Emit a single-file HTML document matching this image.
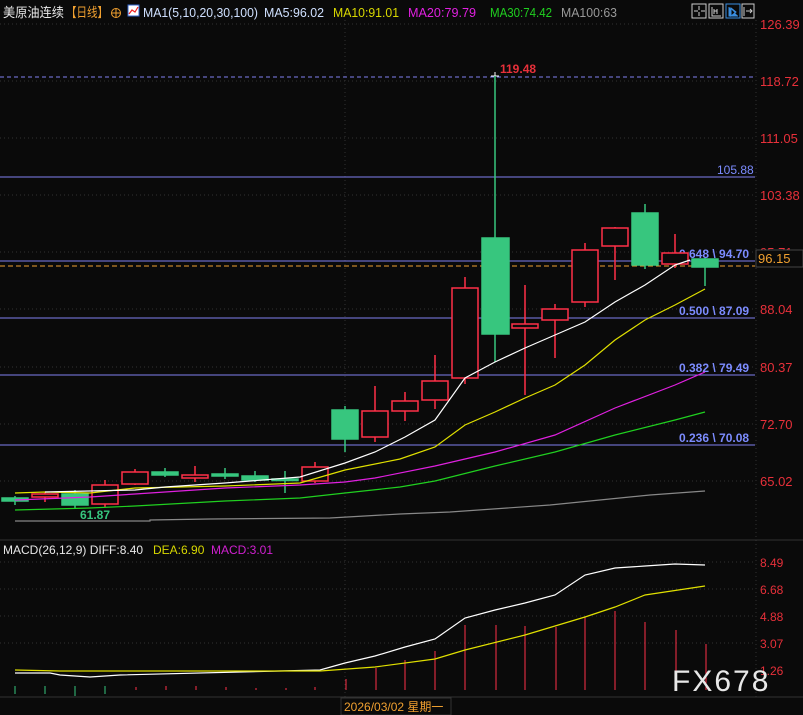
<!DOCTYPE html>
<html><head><meta charset="utf-8"><style>
html,body{margin:0;padding:0;background:#0a0a0a;width:803px;height:715px;overflow:hidden}
svg{display:block}
text{font-family:"Liberation Sans","Noto Sans CJK SC",sans-serif}
</style></head><body>
<svg width="803" height="715" viewBox="0 0 803 715" xmlns="http://www.w3.org/2000/svg">
<rect width="803" height="715" fill="#0a0a0a"/>
<!-- header -->
<text x="3" y="17" font-size="13" fill="#e8e8e8" textLength="61" lengthAdjust="spacingAndGlyphs">美原油连续</text>
<text x="66" y="17" font-size="13" fill="#f0a030" textLength="42" lengthAdjust="spacingAndGlyphs">【日线】</text>
<circle cx="116" cy="13" r="4.5" fill="none" stroke="#f0a030" stroke-width="1"/>
<path d="M111.5 13h9M116 8.5v9" stroke="#f0a030" stroke-width="1"/>
<rect x="128" y="5" width="11" height="11" fill="#fff" stroke="#36c" stroke-width="1"/>
<path d="M129 14l3-4 3 2 3-5" stroke="#e22" fill="none" stroke-width="1.2"/>
<text x="143" y="17" font-size="13" fill="#cfe0ff" textLength="115" lengthAdjust="spacingAndGlyphs">MA1(5,10,20,30,100)</text>
<text x="264" y="17" font-size="13" fill="#cfe0ff" textLength="60" lengthAdjust="spacingAndGlyphs">MA5:96.02</text>
<text x="333" y="17" font-size="13" fill="#d8d800" textLength="66" lengthAdjust="spacingAndGlyphs">MA10:91.01</text>
<text x="408" y="17" font-size="13" fill="#e020e0" textLength="68" lengthAdjust="spacingAndGlyphs">MA20:79.79</text>
<text x="490" y="17" font-size="13" fill="#20d020" textLength="62" lengthAdjust="spacingAndGlyphs">MA30:74.42</text>
<text x="561" y="17" font-size="13" fill="#999" textLength="56" lengthAdjust="spacingAndGlyphs">MA100:63</text>
<g fill="none" stroke-width="1">
<rect x="692" y="4" width="14" height="14" stroke="#ccc"/>
<rect x="709" y="4" width="14" height="14" stroke="#ccc"/>
<rect x="726" y="4" width="14" height="14" stroke="#3a8ee0"/>
<rect x="742" y="4" width="12" height="14" stroke="#ccc"/>
<path d="M699 6v4M699 12v4M694 11h4M701 11h4" stroke="#ccc"/>
<path d="M712 7v9h9M714 9v5M717 9v5M714 11h3" stroke="#ccc"/>
<path d="M729 7v9h9M731 8l5 4-5 4z" stroke="#3a8ee0" fill="#3a8ee0"/>
<path d="M744 7v9M746 11h6M750 9l2 2-2 2" stroke="#ccc"/>
</g>
<!-- grid -->
<g stroke="#333" stroke-dasharray="1 3" stroke-width="1">
<line x1="0" y1="24" x2="756" y2="24"/>
<line x1="0" y1="81" x2="756" y2="81"/>
<line x1="0" y1="138" x2="756" y2="138"/>
<line x1="0" y1="195" x2="756" y2="195"/>
<line x1="0" y1="252" x2="756" y2="252"/>
<line x1="0" y1="309" x2="756" y2="309"/>
<line x1="0" y1="367" x2="756" y2="367"/>
<line x1="0" y1="424" x2="756" y2="424"/>
<line x1="0" y1="481" x2="756" y2="481"/>
<line x1="756" y1="20" x2="756" y2="697"/>
<line x1="345" y1="20" x2="345" y2="697"/>
<line x1="0" y1="562" x2="756" y2="562"/>
<line x1="0" y1="589" x2="756" y2="589"/>
<line x1="0" y1="616" x2="756" y2="616"/>
<line x1="0" y1="643" x2="756" y2="643"/>
</g>
<line x1="0" y1="540" x2="803" y2="540" stroke="#333"/>
<line x1="0" y1="697" x2="803" y2="697" stroke="#333"/>
<!-- fib lines -->
<g stroke="#8080f0" stroke-width="1">
<line x1="0" y1="177" x2="755" y2="177"/>
<line x1="0" y1="261" x2="755" y2="261"/>
<line x1="0" y1="318" x2="755" y2="318"/>
<line x1="0" y1="375" x2="755" y2="375"/>
<line x1="0" y1="445" x2="755" y2="445"/>
</g>
<line x1="0" y1="77" x2="755" y2="77" stroke="#8080f0" stroke-dasharray="4 3"/>
<line x1="0" y1="266" x2="755" y2="266" stroke="#f0a030" stroke-dasharray="5 3"/>
<g font-size="12" font-weight="bold" fill="#7c8cff">
<text x="717" y="174" font-weight="normal">105.88</text>
<text x="679" y="258">0.648 \ 94.70</text>
<text x="679" y="315">0.500 \ 87.09</text>
<text x="679" y="372">0.382 \ 79.49</text>
<text x="679" y="442">0.236 \ 70.08</text>
</g>
<!-- price axis -->
<g font-size="13" fill="#e8303a">
<text x="760" y="29">126.39</text>
<text x="760" y="86">118.72</text>
<text x="760" y="143">111.05</text>
<text x="760" y="200">103.38</text>
<text x="760" y="257">95.71</text>
<text x="760" y="314">88.04</text>
<text x="760" y="372">80.37</text>
<text x="760" y="429">72.70</text>
<text x="760" y="486">65.02</text>
</g>
<rect x="756" y="250" width="47" height="17" fill="#0a0a0a" stroke="#444"/>
<text x="758" y="263" font-size="13" fill="#f0a030">96.15</text>
<text x="500" y="73" font-size="12" font-weight="bold" fill="#e8303a">119.48</text>
<path d="M491 76h8M495 72v8" stroke="#fff"/>
<!-- candles -->
<g stroke-width="1.5">
<g stroke="#37c67e" fill="#37c67e">
<line x1="15" y1="496" x2="15" y2="505"/><rect x="2" y="498" width="26" height="3"/>
<line x1="75" y1="490" x2="75" y2="508"/><rect x="62" y="494" width="26" height="11"/>
<line x1="165" y1="468" x2="165" y2="477"/><rect x="152" y="472" width="26" height="3"/>
<line x1="225" y1="468" x2="225" y2="479"/><rect x="212" y="474" width="26" height="2"/>
<line x1="255" y1="471" x2="255" y2="482"/><rect x="242" y="476" width="26" height="4"/>
<line x1="285" y1="471" x2="285" y2="493"/><rect x="272" y="479" width="26" height="1.5"/>
<line x1="345" y1="406" x2="345" y2="452"/><rect x="332" y="410" width="26" height="29"/>
<line x1="495" y1="76" x2="495" y2="362"/><rect x="482" y="238" width="27" height="96"/>
<line x1="645" y1="204" x2="645" y2="269"/><rect x="632" y="213" width="26" height="52"/>
<line x1="705" y1="258" x2="705" y2="286"/><rect x="692" y="259" width="26" height="8"/>
</g>
<g stroke="#ff3048" fill="#0a0a0a">
<line x1="45" y1="492" x2="45" y2="502"/><rect x="32" y="494" width="26" height="3"/>
<line x1="105" y1="480" x2="105" y2="507"/><rect x="92" y="485" width="26" height="19"/>
<line x1="135" y1="469" x2="135" y2="485"/><rect x="122" y="472" width="26" height="12"/>
<line x1="195" y1="466" x2="195" y2="482"/><rect x="182" y="475" width="26" height="3"/>
<line x1="315" y1="462" x2="315" y2="483"/><rect x="302" y="467" width="26" height="14"/>
<line x1="375" y1="386" x2="375" y2="442"/><rect x="362" y="411" width="26" height="26"/>
<line x1="405" y1="392" x2="405" y2="421"/><rect x="392" y="401" width="26" height="10"/>
<line x1="435" y1="355" x2="435" y2="409"/><rect x="422" y="381" width="26" height="19"/>
<line x1="465" y1="277" x2="465" y2="384"/><rect x="452" y="288" width="26" height="90"/>
<line x1="525" y1="285" x2="525" y2="395"/><rect x="512" y="324" width="26" height="4"/>
<line x1="555" y1="304" x2="555" y2="358"/><rect x="542" y="309" width="26" height="11"/>
<line x1="585" y1="243" x2="585" y2="307"/><rect x="572" y="250" width="26" height="52"/>
<line x1="615" y1="227" x2="615" y2="280"/><rect x="602" y="228" width="26" height="18"/>
<line x1="675" y1="234" x2="675" y2="268"/><rect x="662" y="253" width="26" height="11"/>
</g>
</g>
<text x="80" y="519" font-size="12" font-weight="bold" fill="#37c67e">61.87</text>
<!-- MAs -->
<g fill="none" stroke-width="1.2">
<polyline stroke="#888" points="15,521 150,521 150,520 210,519 330,518 400,514 450,512 550,505 650,495 705,491"/>
<polyline stroke="#20d020" points="15,510 90,508 135,506 225,501 300,498 345,493 400,487 435,481 495,466 555,452 615,435 675,420 705,412"/>
<polyline stroke="#e020e0" points="15,500 90,497 135,494 225,488 300,485 345,482 375,478 435,466 495,452 555,435 615,408 675,385 705,372"/>
<polyline stroke="#e0e000" points="15,493 45,492 90,493 135,488 225,486 300,483 345,470 400,459 435,447 465,425 495,412 525,398 555,385 585,365 615,340 645,320 675,305 705,289"/>
<polyline stroke="#fff" points="45,492 135,490 165,487 225,483 300,477 345,463 375,452 405,437 435,420 465,378 495,362 525,348 555,335 585,322 615,302 645,285 675,265 690,260"/>
</g>
<!-- MACD -->
<text x="3" y="554" font-size="12" fill="#e8e8e8">MACD(26,12,9) DIFF:8.40</text>
<text x="153" y="554" font-size="12" fill="#d8d800">DEA:6.90</text>
<text x="211" y="554" font-size="12" fill="#d020d0">MACD:3.01</text>
<g font-size="12" fill="#e8303a">
<text x="760" y="567">8.49</text><text x="760" y="594">6.68</text><text x="760" y="621">4.88</text><text x="760" y="648">3.07</text><text x="760" y="675">1.26</text>
</g>
<g stroke="#ff3048" stroke-width="1">
<line x1="136" y1="687" x2="136" y2="690"/><line x1="166" y1="686" x2="166" y2="690"/><line x1="196" y1="686" x2="196" y2="690"/><line x1="226" y1="687" x2="226" y2="690"/><line x1="256" y1="688" x2="256" y2="690"/><line x1="286" y1="688" x2="286" y2="690"/>
<line x1="315" y1="687" x2="315" y2="690"/><line x1="346" y1="679" x2="346" y2="690"/><line x1="376" y1="668" x2="376" y2="690"/><line x1="405" y1="660" x2="405" y2="690"/><line x1="435" y1="651" x2="435" y2="690"/><line x1="465" y1="625" x2="465" y2="690"/><line x1="496" y1="625" x2="496" y2="690"/><line x1="525" y1="626" x2="525" y2="690"/><line x1="556" y1="627" x2="556" y2="690"/><line x1="585" y1="617" x2="585" y2="690"/><line x1="615" y1="611" x2="615" y2="690"/><line x1="645" y1="622" x2="645" y2="690"/><line x1="676" y1="630" x2="676" y2="690"/><line x1="706" y1="644" x2="706" y2="690"/>
</g>
<g stroke="#37c67e"><line x1="15" y1="686" x2="15" y2="694"/><line x1="45" y1="686" x2="45" y2="694"/><line x1="75" y1="686" x2="75" y2="696"/><line x1="105" y1="686" x2="105" y2="694"/></g>
<g fill="none" stroke-width="1.2">
<polyline stroke="#fff" points="15,673 50,673 60,675 90,677 120,675 320,670 345,663 375,656 405,647 435,639 465,618 495,610 525,603 555,595 585,575 615,568 645,566 675,564 705,565"/>
<polyline stroke="#e0e000" points="15,670 60,671 320,671 375,667 435,659 465,650 525,635 585,617 615,607 645,595 705,586"/>
</g>
<text x="672" y="691" font-size="30" fill="#e8e8e8" letter-spacing="2">FX678</text>
<rect x="341" y="698" width="110" height="17" fill="#0a0a0a" stroke="#333"/>
<text x="344" y="711" font-size="12" fill="#f0a030">2026/03/02 星期一</text>
</svg>
</body></html>
